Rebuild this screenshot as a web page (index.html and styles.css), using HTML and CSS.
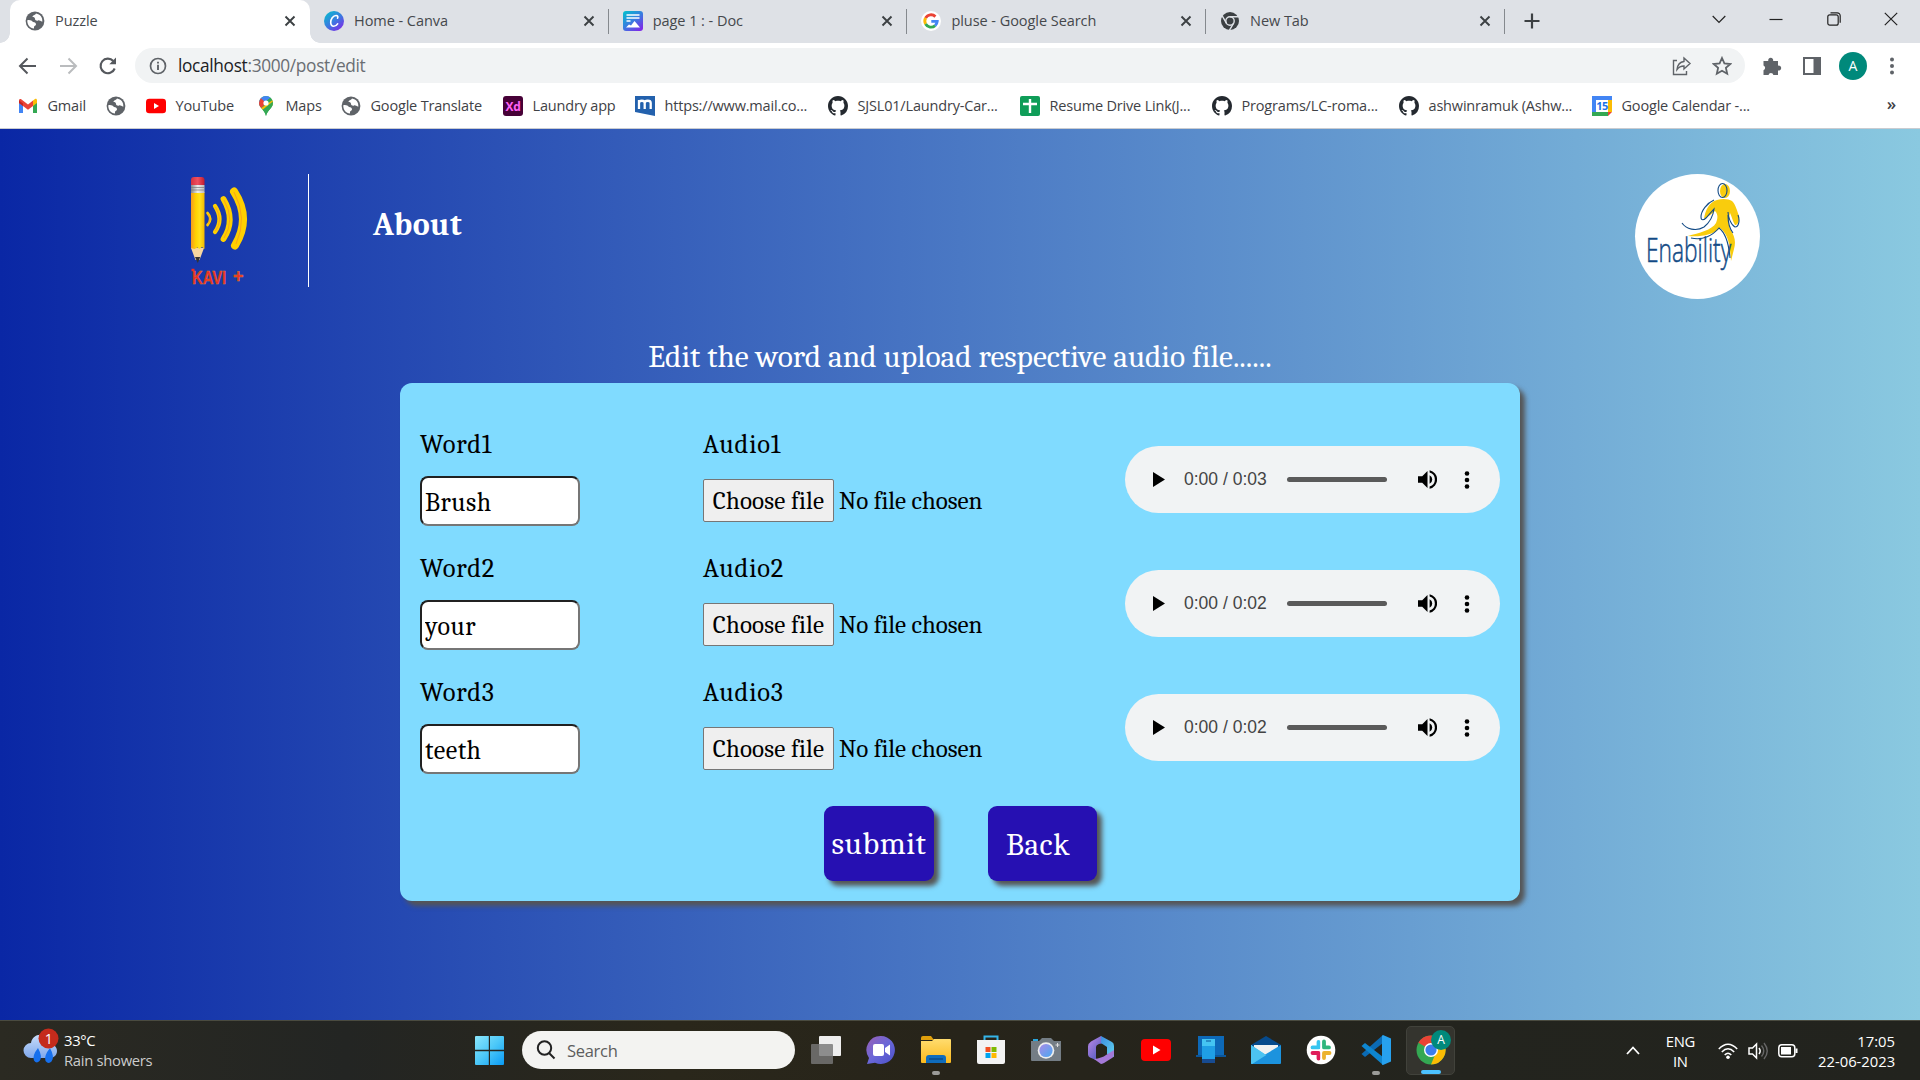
FILE: index.html
```html
<!DOCTYPE html>
<html lang="en">
<head>
<meta charset="utf-8">
<title>Puzzle</title>
<link rel="stylesheet" href="styles.css">
</head>
<body>
<svg class="defs" width="0" height="0">
  <defs>
    <symbol id="globe" viewBox="0 0 20 20"><circle cx="10" cy="10" r="9.4" fill="#5f6368"/><path d="M11 2.5c-1 2-3.500 1.500-3.500 3.500 1.500 0 2.500.5 2.500 2s2 2 3 1.500 2.500.5 4.300 1.200c.5-4-2-7.500-6.300-8.200z" fill="#fff"/><path d="M2.300 9.200c2.500-.6 4.700.3 5.700 1.800 2 0 3 1 3 2.500 0 1.300-2 1.300-2 2.500v1.600C5 17.200 2 13.500 2.300 9.200z" fill="#fff"/></symbol>
    <symbol id="x" viewBox="0 0 12 12"><path d="M1.500 1.500l9 9M10.500 1.500l-9 9" stroke="#3c4043" stroke-width="1.9" fill="none"/></symbol>
    <symbol id="github" viewBox="0 0 16 16"><path fill="#24292f" d="M8 0C3.580 0 0 3.580 0 8c0 3.540 2.290 6.530 5.470 7.590.4.070.55-.17.55-.38 0-.19-.010-.82-.010-1.490-2.010.37-2.530-.49-2.690-.94-.09-.23-.48-.94-.82-1.130-.28-.15-.68-.52-.010-.53.63-.010 1.080.58 1.230.82.72 1.210 1.870.87 2.330.66.070-.52.280-.87.510-1.070-1.780-.2-3.640-.89-3.640-3.950 0-.87.310-1.590.820-2.150-.08-.2-.36-1.020.08-2.120 0 0 .67-.21 2.200.82.640-.18 1.320-.27 2-.27s1.360.09 2 .27c1.530-1.040 2.200-.82 2.200-.82.440 1.100.160 1.920.080 2.120.510.560.820 1.270.820 2.150 0 3.070-1.870 3.750-3.650 3.950.290.250.540.730.540 1.480 0 1.070-.010 1.930-.010 2.200 0 .21.150.46.550.38A8.010 8.010 0 0 0 16 8c0-4.420-3.580-8-8-8z"/></symbol>
    <symbol id="youtube" viewBox="0 0 30 24"><rect width="30" height="22" y="1" rx="5" fill="#f00"/><path d="M12 7.500v9l7.500-4.500z" fill="#fff"/></symbol>
    <symbol id="play" viewBox="0 0 12 15"><path d="M0 0v15l12-7.500z"/></symbol>
    <symbol id="volume" viewBox="0 0 18 18"><path d="M0 6v6h4l5 5V1L4 6zM13.500 9A4.500 4.500 0 0 0 11 5v8a4.500 4.500 0 0 0 2.500-4zM11 .2v2.100a7 7 0 0 1 0 13.400v2.100a9 9 0 0 0 0-17.600z"/></symbol>
    <symbol id="dots" viewBox="0 0 6 18"><circle cx="3" cy="2.500" r="2.300"/><circle cx="3" cy="9" r="2.300"/><circle cx="3" cy="15.500" r="2.300"/></symbol>
    <linearGradient id="canva" x2=".8" y2="1"><stop offset="0" stop-color="#00c4cc"/><stop offset=".55" stop-color="#3a7be0"/><stop offset="1" stop-color="#7d2ae8"/></linearGradient>
    <linearGradient id="win" x2="1" y2="1"><stop stop-color="#8be6fb"/><stop offset=".5" stop-color="#4cc8f8"/><stop offset="1" stop-color="#0a9bf5"/></linearGradient>
    <linearGradient id="chatg" x2="1" y2="1"><stop stop-color="#9a5fb5"/><stop offset=".5" stop-color="#6a67d8"/><stop offset="1" stop-color="#4a50c8"/></linearGradient>
    <linearGradient id="foldg" x2="0" y2="1"><stop stop-color="#ffdc6e"/><stop offset="1" stop-color="#fbb91d"/></linearGradient>
    <linearGradient id="lens" x2="1" y2="1"><stop stop-color="#a98be8"/><stop offset="1" stop-color="#4aa9f0"/></linearGradient>
    <linearGradient id="m1" x2="1" y2="1"><stop stop-color="#c08be8"/><stop offset="1" stop-color="#3c50b8"/></linearGradient>
    <linearGradient id="m2" x2="1" y2="1"><stop stop-color="#3d8be0"/><stop offset="1" stop-color="#5fd4f0"/></linearGradient>
    <linearGradient id="rain" x2="0" y2="1"><stop stop-color="#c7dcfa"/><stop offset="1" stop-color="#7fa8ec"/></linearGradient>
    <linearGradient id="pencil" x2="1" y2="0"><stop stop-color="#f59b20"/><stop offset=".35" stop-color="#ffd200"/><stop offset=".65" stop-color="#ffe11c"/><stop offset="1" stop-color="#f2b800"/></linearGradient>
    <linearGradient id="eraser" x2="1" y2="0"><stop stop-color="#d63240"/><stop offset=".5" stop-color="#ef5060"/><stop offset="1" stop-color="#c01c30"/></linearGradient>
    <linearGradient id="ferrule" x2="1" y2="0"><stop stop-color="#888"/><stop offset=".5" stop-color="#eee"/><stop offset="1" stop-color="#bbb"/></linearGradient>
  </defs>
</svg>

<header class="browser">
  <div class="tabs">
    <div class="tab active"><svg class="fav"><use href="#globe"/></svg><span>Puzzle</span><svg class="cls"><use href="#x"/></svg></div>
    <div class="tab">
      <svg class="fav" viewBox="0 0 20 20"><circle cx="10" cy="10" r="10" fill="url(#canva)"/><path d="M13.500 7.200c.8-1.200.3-2.700-1.500-2.700-3 0-5.300 3.700-5.300 6.800 0 2.400 1.200 3.900 3 3.900 1.700 0 3-.9 3.900-2.400" fill="none" stroke="#fff" stroke-width="1.600" stroke-linecap="round"/></svg>
      <span>Home - Canva</span><svg class="cls"><use href="#x"/></svg></div>
    <div class="tab">
      <svg class="fav" viewBox="0 0 20 20"><rect width="20" height="20" rx="3" fill="url(#canva)"/><path d="M3.500 4h13M3.500 7h13M3.500 10h4" stroke="#fff" stroke-width="1.700"/><path d="M3 16.500l3-3 2 1 3.500-4.500 5.500 6.500z" fill="#fff"/></svg>
      <span>page 1 : - Doc</span><svg class="cls"><use href="#x"/></svg></div>
    <div class="tab">
      <svg class="fav" viewBox="0 0 20 20"><circle cx="10" cy="10" r="10" fill="#fff"/><g fill="none" stroke-width="2.900"><path d="M14.400 5.600A6.200 6.200 0 0 0 4.600 7" stroke="#ea4335"/><path d="M4.600 7a6.200 6.200 0 0 0 0 6" stroke="#fbbc05"/><path d="M4.600 13a6.200 6.200 0 0 0 9.500 1.600" stroke="#34a853"/><path d="M14.100 14.600a6.200 6.200 0 0 0 2.100-4.200H10.300" stroke="#4285f4"/></g></svg>
      <span>pluse - Google Search</span><svg class="cls"><use href="#x"/></svg></div>
    <div class="tab">
      <svg class="fav" viewBox="0 0 20 20"><circle cx="10" cy="10" r="9" fill="#3c4043"/><circle cx="10" cy="10" r="4.200" fill="none" stroke="#dee1e6" stroke-width="1.400"/><path d="M10 5.800h8.500M6.400 12.100L2.200 4.800M13.600 12.100L9.400 19.300" stroke="#dee1e6" stroke-width="1.400"/></svg>
      <span>New Tab</span><svg class="cls"><use href="#x"/></svg></div>
    <svg class="plus" viewBox="0 0 16 16"><path d="M8 .5v15M.5 8h15" stroke="#3c4043" stroke-width="2.200"/></svg>
    <div class="wincontrols">
      <svg viewBox="0 0 14 14"><path d="M.7 4L7 10.500 13.300 4" /></svg>
      <svg viewBox="0 0 14 14"><path d="M.5 7.500h13"/></svg>
      <svg viewBox="0 0 14 14"><rect x=".8" y="2.800" width="10.400" height="10.400" rx="2"/><path d="M3.500.8h6.700a3 3 0 0 1 3 3v7"/></svg>
      <svg viewBox="0 0 14 14"><path d="M.8.8l12.400 12.400M13.200.8L.8 13.200"/></svg>
    </div>
  </div>
  <div class="toolbar">
    <svg class="nav" viewBox="0 0 20 20"><path d="M18 10H2.500M9.500 2.500L2 10l7.500 7.500" fill="none" stroke="#55585d" stroke-width="2"/></svg>
    <svg class="nav" viewBox="0 0 20 20"><path d="M2 10h15.500M10.500 2.500L18 10l-7.500 7.500" fill="none" stroke="#babcbe" stroke-width="2"/></svg>
    <svg class="nav" viewBox="0 0 20 20"><path d="M16.700 12.500A7.300 7.300 0 1 1 15.300 5" fill="none" stroke="#55585d" stroke-width="2.100"/><path d="M18 1.500V8.200H11.300z" fill="#55585d"/></svg>
    <div class="omnibox">
      <svg width="18" height="18" viewBox="0 0 18 18"><circle cx="9" cy="9" r="7.500" fill="none" stroke="#5f6368" stroke-width="1.700"/><path d="M9 7.800V13M9 4.800v1.800" stroke="#5f6368" stroke-width="1.900"/></svg>
      <span class="url">localhost<i>:3000/post/edit</i></span>
      <svg class="share" width="20" height="20" viewBox="0 0 20 20"><path d="M5 4.500H1.500v14h13V15M12 2l6 5.500-6 5.500V10c-3 0-5 .7-7 3.500.5-4.500 3-7.500 7-8z" fill="none" stroke="#5f6368" stroke-width="1.400"/></svg>
      <svg width="20" height="20" viewBox="0 0 20 20"><path d="M10 2l2.400 5.400 5.900.6-4.400 3.900 1.300 5.800-5.200-3-5.200 3 1.300-5.800L1.700 8l5.900-.6z" fill="none" stroke="#5f6368" stroke-width="1.800"/></svg>
    </div>
    <div class="actions">
      <svg viewBox="0 0 20 20"><path d="M1.500 5h4.800a2.500 2.500 0 1 1 4.800 0H16v4.700a2.500 2.500 0 1 1 0 4.800V19h-4.600a2.500 2.500 0 0 0-4.900 0h-5v-4.800a2.500 2.500 0 0 0 0-4.700z" fill="#5f6368"/></svg>
      <svg viewBox="0 0 20 20"><path d="M2 2h16v16H2zM12.500 2v16" fill="none" stroke="#5f6368" stroke-width="2"/><path d="M12 2h6v16h-6z" fill="#5f6368"/></svg>
      <b class="avatar">A</b>
      <svg viewBox="0 0 20 20" fill="#5f6368"><circle cx="10" cy="3.500" r="2"/><circle cx="10" cy="10" r="2"/><circle cx="10" cy="16.500" r="2"/></svg>
    </div>
  </div>
  <div class="bookmarks">
    <a><svg viewBox="0 0 20 20"><path d="M1 4v13h4V9z" fill="#4285f4"/><path d="M19 4v13h-4V9z" fill="#34a853"/><path d="M15 4.500l2-1.400c1-.6 2 0 2 1.300V7l-4 3z" fill="#fbbc04"/><path d="M1 7V4.400c0-1.300 1.200-1.900 2.200-1.200L10 8.400l5-3.900V10l-5 3.800z" fill="#ea4335"/><path d="M1 7V4.400l4 3V10z" fill="#c5221f"/></svg><span>Gmail</span></a>
    <a><svg><use href="#globe"/></svg></a>
    <a><svg><use href="#youtube"/></svg><span>YouTube</span></a>
    <a><svg viewBox="0 0 20 20"><path d="M10 0a7 7 0 0 0-7 7c0 5 5.500 6.500 7 13 1.500-6.500 7-8 7-13a7 7 0 0 0-7-7z" fill="#34a853"/><path d="M10 0a7 7 0 0 0-7 7l1 3L14.500 1.600A7 7 0 0 0 10 0z" fill="#4285f4"/><path d="M3 7c0 2 1 3.600 2.300 5L10 7 5 2.200A7 7 0 0 0 3 7z" fill="#ea4335"/><path d="M5.300 12L16.400 4.200c1.600 4-.8 6.300-3 8.800L7 13.700z" fill="#fbbc04"/><path d="M10 20c-.6-3-2-4.700-3.400-6.200L16.800 5.500C18 12 11.500 13.500 10 20z" fill="#34a853"/><circle cx="10" cy="7" r="2.600" fill="#fff"/></svg><span>Maps</span></a>
    <a><svg><use href="#globe"/></svg><span>Google Translate</span></a>
    <a><svg viewBox="0 0 20 20"><rect width="20" height="20" rx="3" fill="#470137"/><text x="10" y="14.500" text-anchor="middle" class="xd">Xd</text></svg><span>Laundry app</span></a>
    <a><svg viewBox="0 0 20 20"><path d="M0 0h20v20L0 16z" fill="#2361ad"/><path d="M4 13V4M4 7c0-3 5.700-3 5.700 0v6M9.700 7c0-3 6-3 6 0v6" fill="none" stroke="#fff" stroke-width="2.300"/></svg><span>https://www.mail.co...</span></a>
    <a><svg><use href="#github"/></svg><span>SJSL01/Laundry-Car...</span></a>
    <a><svg viewBox="0 0 20 20"><rect width="20" height="20" rx="2" fill="#0f9d58"/><path d="M10 3v14M3 8h14" stroke="#fff" stroke-width="2.400"/></svg><span>Resume Drive Link(J...</span></a>
    <a><svg><use href="#github"/></svg><span>Programs/LC-roma...</span></a>
    <a><svg><use href="#github"/></svg><span>ashwinramuk (Ashw...</span></a>
    <a><svg viewBox="0 0 20 20"><path d="M0 0h20v4H4v16H0z" fill="#4285f4"/><path d="M16 4h4v12h-4z" fill="#fbbc04"/><path d="M4 16h12v4H0v-4z" fill="#34a853"/><path d="M16 16h4l-4 4z" fill="#ea4335"/><path d="M4 4h12v12H4z" fill="#fff"/><text x="10" y="14" text-anchor="middle" class="cal">15</text></svg><span>Google Calendar -...</span></a>
    <b class="more">»</b>
  </div>
</header>

<main class="page">
  <div class="topnav">
    <svg class="kavi" width="60" height="120" viewBox="0 0 60 120">
      <path d="M3 74h13L11.500 86h-4z" fill="#f6d6a0"/><path d="M7 83h5.200L9.800 89z" fill="#333"/>
      <path d="M3 18h13.500v57l-2.500-2-2.400 2-2.200-1.500L6.500 75 3 74z" fill="url(#pencil)"/>
      <path d="M3 11h13.500v8H3z" fill="url(#ferrule)"/><path d="M3 13.500h13.500M3 16h13.500" stroke="#777" stroke-width=".7"/>
      <path d="M3 11V6q0-3 3-3h7.500q3 0 3 3v5z" fill="url(#eraser)"/>
      <g fill="none" stroke="#ffd000" stroke-linecap="round"><path d="M19.500 39q5.500 6 0 12" stroke-width="2.600"/><path d="M27 32q9 13.500 0 26" stroke-width="4.200"/><path d="M35.500 25q12.500 21 0 40" stroke-width="5.800"/><path d="M46 17.500q17.500 27 1 54" stroke-width="8"/></g>
      <g fill="none" stroke="#f9a51a" stroke-width="1"><path d="M20 40q4 5 0 10M27.500 33q8 13 0 24M36 26q11.500 20 0 38M46 18q14 26 2 52"/></g>
      <text transform="translate(4 110) scale(.82 1)" class="kavitext">KAVI</text><text x="45" y="108" class="kavitext">+</text>
      <path d="M3.500 96h3" stroke="#ee2a24" stroke-width="2.500"/>
    </svg>
    <div class="rule"></div>
    <a class="about">About</a>
    <svg class="enability" width="125" height="125" viewBox="0 0 125 125">
      <circle cx="62.500" cy="62.500" r="62.500" fill="#fff"/>
      <g fill="#f9cc0d"><ellipse cx="90" cy="17" rx="5" ry="7"/><path d="M82 26c6-2 12-1 15 1 4 4 5 10 7 15 1 4-1 9-4 9-2-3-3-8-5-12-1 6-2 11 0 16 5 7 6 13 4 20l-3 12c-1-12-1-25-11-33-7 7-19 9-32 8 11-3 24-6 28-13 2-5 2-9-1-12-3 3-8 6-11 8 1-8 5-17 13-19z"/></g>
      <g fill="none" stroke="#124a85" stroke-width="1.100"><ellipse cx="87.500" cy="16.500" rx="4.500" ry="7"/><path d="M79 26c-7 3-13 11-13 17 0 4 3 3 5 1l8-9c-1 8-5 14-10 18-8 5-18 2-22-4M56 64c12 3 22-3 28-10 8 6 10 18 11 30M93 38c0 5 3 13 7 15 4 0 5-7 3-12M93 41c0 8 1 13 5 18"/></g>
      <text transform="translate(11 88) scale(.69 1)" class="enatext">Enability</text>
    </svg>
  </div>
  <h1 class="heading">Edit the word and upload respective audio file......</h1>
  <form class="card">
    <section class="entry">
      <div class="word"><label>Word1</label><input type="text" value="Brush"></div>
      <div class="file"><label>Audio1</label><div class="picker"><button type="button">Choose file</button><span>No file chosen</span></div></div>
      <div class="player"><svg width="12" height="15"><use href="#play"/></svg><time>0:00 / 0:03</time><i></i><svg width="19" height="19"><use href="#volume"/></svg><svg width="6" height="18"><use href="#dots"/></svg></div>
    </section>
    <section class="entry">
      <div class="word"><label>Word2</label><input type="text" value="your"></div>
      <div class="file"><label>Audio2</label><div class="picker"><button type="button">Choose file</button><span>No file chosen</span></div></div>
      <div class="player"><svg width="12" height="15"><use href="#play"/></svg><time>0:00 / 0:02</time><i></i><svg width="19" height="19"><use href="#volume"/></svg><svg width="6" height="18"><use href="#dots"/></svg></div>
    </section>
    <section class="entry">
      <div class="word"><label>Word3</label><input type="text" value="teeth"></div>
      <div class="file"><label>Audio3</label><div class="picker"><button type="button">Choose file</button><span>No file chosen</span></div></div>
      <div class="player"><svg width="12" height="15"><use href="#play"/></svg><time>0:00 / 0:02</time><i></i><svg width="19" height="19"><use href="#volume"/></svg><svg width="6" height="18"><use href="#dots"/></svg></div>
    </section>
    <div class="buttons"><button type="button" class="submit">submit</button><button type="button" class="back">Back</button></div>
  </form>
</main>

<footer class="taskbar">
  <div class="weather">
    <svg width="36" height="38" viewBox="0 0 36 38"><path d="M8 30a7.500 7.500 0 0 1 0-15C9 9 14 6 19 7c6 1 9 5 9 9 4 1 6 4 6 7 0 4-3 7-7 7z" fill="url(#rain)"/><path d="M15 20q5 9 1.500 13-3 3-5.500-.5-2-5 4-12.500zM27 20q5 9 1.500 13.500-3 3-6-.5-2-5 4.500-13z" fill="#1670ee"/><circle cx="25.500" cy="10.500" r="10" fill="#c42b1c"/><text x="25.500" y="16" text-anchor="middle" class="count">1</text></svg>
    <p>33°C<br><em>Rain showers</em></p>
  </div>
  <div class="center">
    <svg width="29" height="29" viewBox="0 0 29 29" class="start"><path d="M0 1q0-1 1-1h12.800v13.800H0zM15 0h13q1 0 1 1v12.800H15zM0 15.200h13.800V29H1q-1 0-1-1zM15 15.200h14V28q0 1-1 1H15z" fill="url(#win)"/></svg>
    <div class="search"><svg width="20" height="20" viewBox="0 0 20 20"><circle cx="8.500" cy="8" r="6.700"/><path d="M13 13l5.500 5.500"/></svg><span>Search</span></div>
    <div class="apps">
      <a><svg viewBox="0 0 30 30"><rect x="8" y="1" width="22" height="20" rx="1" fill="#eee"/><rect y="9" width="22" height="20" rx="1" fill="#777" fill-opacity=".82"/></svg></a>
      <a><svg viewBox="0 0 30 30"><path d="M15 1a14 14 0 1 1-6 26.700L1 29l2-6A14 14 0 0 1 15 1z" fill="url(#chatg)"/><rect x="7" y="9" width="11" height="12" rx="2" fill="#fff"/><path d="M19 13l5-3.500v11L19 17z" fill="#fff"/></svg></a>
      <a class="run"><svg viewBox="0 0 30 30"><path d="M0 3q0-2 2-2h8l3 4H0z" fill="#e0a00c"/><path d="M0 6h11l2-2h16q1 0 1 1v22q0 1-1 1H1q-1 0-1-1z" fill="url(#foldg)"/><path d="M5 28v-5q0-3 3-3h14q3 0 3 3v5z" fill="#0f6cbd"/><path d="M8 24h14" stroke="#0a4a88" stroke-width="1.400"/></svg></a>
      <a><svg viewBox="0 0 30 30"><path d="M8.500 6V1.500h13V6" fill="none" stroke="#35b5ea" stroke-width="2"/><path d="M1 5h28v22q0 2-2 2H3q-2 0-2-2z" fill="#f3f3f3"/><path d="M9.500 12h5v5h-5z" fill="#f25022"/><path d="M15.500 12h5v5h-5z" fill="#7fba00"/><path d="M9.500 18h5v5h-5z" fill="#00a4ef"/><path d="M15.500 18h5v5h-5z" fill="#ffb900"/></svg></a>
      <a><svg viewBox="0 0 30 30"><path d="M2 4h5v2H2z" fill="#29a5dc"/><path d="M0 6h8l3-3h9l3 3h7v19q0 1-1 1H1q-1 0-1-1z" fill="#747d85"/><circle cx="15" cy="15.500" r="8.300" fill="#eee"/><circle cx="15" cy="15.500" r="6.600" fill="url(#lens)"/><path d="M24.500 10h4M26.500 8v4" stroke="#ddd"/></svg></a>
      <a><svg viewBox="0 0 30 30"><path d="M15 1L5 6.500q-3 2-3 5v8q0 2 2 3l6 2.500V12q0-2 3-3l5-1z" fill="url(#m1)"/><path d="M15 1l11 6q2 1 2 4v11l-7-3v-7l-6-4z" fill="url(#m2)"/><path d="M8 24l7 5q1 0 3-1l8-5q2-1 2-4v-4l-8 5q-4 3-12 4z" fill="#a479d8"/></svg></a>
      <a><svg viewBox="0 0 30 30"><rect y="4" width="30" height="22" rx="4" fill="#f00"/><path d="M12 10.500v9l7.500-4.500z" fill="#fff"/></svg></a>
      <a><svg viewBox="0 0 30 30"><path d="M2 1h26v20H2z" fill="#0d69b8"/><path d="M0 20h30v2H0z" fill="#0b569b"/><path d="M6 4h13v20H6z" fill="#1f9fe5"/><path d="M6 4h13v7H6z" fill="#44c5f2"/><path d="M6 24h13v4H6z" fill="#174b91"/><path d="M10 6h5" stroke="#0b569b"/></svg></a>
      <a><svg viewBox="0 0 30 30"><path d="M0 10L15 1l15 9v6H0z" fill="#064a8c"/><path d="M3 10h24v12H3z" fill="#f1f1f1"/><path d="M0 10l15 10v9H1q-1 0-1-1z" fill="#45bdf0"/><path d="M30 10v18q0 1-1 1H1l14-10z" fill="#1c93de"/><path d="M0 10l15 10 2-1L1 29q-1 0-1-1z" fill="#4cc3f2"/></svg></a>
      <a><svg viewBox="0 0 30 30"><circle cx="15" cy="15" r="14.300" fill="#fff"/><g stroke-width="3.800" stroke-linecap="round"><path d="M12.500 7v5.500M6.500 12.500h6" stroke="#36c5f0"/><path d="M18 6.500v6M18 12.500h5" stroke="#2eb67d"/><path d="M18 18v5M18 18h5.500" stroke="#ecb22e"/><path d="M12.500 18v5.500M6.500 18h6" stroke="#e01e5a"/></g><path d="M15.200 5v20M5 15.200h20" stroke="#fff" stroke-width="1.500"/></svg></a>
      <a class="run"><svg viewBox="0 0 30 30"><path d="M22 0v8L4 22l-3.500-3L22 0z" fill="#0b6bb5"/><path d="M22 30v-8L4 8 .5 11z" fill="#0e86d0"/><path d="M22 0l8 3.500v23L22 30q-1 0-1-1V1z" fill="#27a1ee"/></svg></a>
      <a class="current"><svg viewBox="0 0 30 30"><circle cx="15" cy="15" r="14.500" fill="#34a853"/><path d="M15 15L2.400 7.700A14.500 14.500 0 0 1 27.600 7.700z" fill="#ea4335"/><path d="M27.600 7.700A14.500 14.500 0 0 1 15 29.500L21 15l-2-7.300z" fill="#fbbc04"/><circle cx="15" cy="15" r="7" fill="#fff"/><circle cx="15" cy="15" r="5.600" fill="#3b7ded"/></svg><b>A</b></a>
    </div>
  </div>
  <div class="tray">
    <svg width="14" height="9" viewBox="0 0 14 9"><path d="M1 8l6-6.500L13 8" stroke-width="1.800"/></svg>
    <p class="lang">ENG<br>IN</p>
    <svg width="20" height="18" viewBox="0 0 20 18"><path d="M.8 7q9.200-9.500 18.400 0M3.800 10q6.200-6.500 12.400 0M6.700 13q3.300-3.500 6.600 0" stroke-width="1.500"/><circle cx="10" cy="15.200" r="1.800" fill="#fff" stroke="none"/></svg>
    <svg width="20" height="18" viewBox="0 0 20 18"><path d="M1 6h3.500L8.500 2v14l-4-4H1zM11 6q2.300 3 0 6" stroke-width="1.500"/><path d="M13.500 3.500q4.500 5.500 0 11M16 1q6.500 8 0 16" stroke="#666" stroke-width="1.400"/></svg>
    <svg width="20" height="14" viewBox="0 0 20 14"><rect x=".8" y=".8" width="16" height="12" rx="3" stroke-width="1.500"/><path d="M3 3h10v7.600H3zM17.500 4.500h2v4.500h-2z" fill="#fff" stroke="none"/></svg>
    <p class="clock">17:05<br>22-06-2023</p>
  </div>
</footer>
</body>
</html>
```
FILE: styles.css
```css
* { box-sizing: border-box; }
body { margin: 0; width: 1920px; height: 1080px; overflow: hidden; display: flex; flex-direction: column; font-family: "Open Sans", "Noto Sans", sans-serif; }
p { margin: 0; }
svg { flex: none; display: block; }
.defs { position: absolute; }

/* browser chrome */
.browser { height: 129px; flex: none; background: #fff; border-bottom: 1px solid #c9ccd1; }
.tabs { height: 43px; background: #dee1e6; display: flex; padding-left: 10px; align-items: stretch; }
.tab { width: 298.700px; flex: none; display: flex; align-items: center; padding: 0 14px 1px 14px; font-size: 14.500px; letter-spacing: -.05px; color: #45484c; position: relative; }
.tab.active { width: 300px; background: #fff; border-radius: 10px 10px 0 0; padding-left: 15px; }
.tab.active::before, .tab.active::after { content: ""; position: absolute; bottom: 0; width: 10px; height: 10px; }
.tab.active::before { left: -10px; background: radial-gradient(circle at 0 0, transparent 9.500px, #fff 10px); }
.tab.active::after { right: -10px; background: radial-gradient(circle at 100% 0, transparent 9.500px, #fff 10px); }
.tab:not(.active)::after { content: ""; width: 1px; height: 25px; background: #85898e; position: absolute; right: 0; top: 9px; }
.tab span { flex: 1; white-space: nowrap; padding-bottom: 1px; }
.fav { width: 20px; height: 20px; margin-right: 10px; }
.cls { width: 12px; height: 12px; }
.plus { width: 16px; height: 16px; margin: 13px 0 0 19px; }
.wincontrols { margin-left: auto; display: flex; gap: 43.300px; padding: 12px 22px 0 0; }
.wincontrols svg { width: 14px; height: 14px; fill: none; stroke: #222; stroke-width: 1.200; }
.toolbar { height: 45px; display: flex; align-items: center; padding-left: 18px; }
.nav { width: 20px; height: 20px; margin-right: 20px; }
.omnibox { width: 1610px; height: 35px; margin-left: -3px; border-radius: 18px; background: #f1f3f4; display: flex; align-items: center; padding: 0 13px 0 14px; }
.url { margin-left: 11px; font-size: 17.300px; letter-spacing: -.33px; color: #202124; }
.url i { font-style: normal; color: #6a6e73; }
.share { margin-left: auto; margin-right: 20px; }
.actions { display: flex; align-items: center; margin-left: 17px; }
.actions svg { width: 20px; height: 20px; margin-right: 20px; }
.avatar { width: 28px; height: 28px; border-radius: 50%; background: #00897b; color: #fff; font-size: 14px; font-weight: 400; text-align: center; line-height: 28px; margin: 0 15px 0 -3px; }
.actions svg:last-child { margin: 0; }
.bookmarks { height: 36px; display: grid; grid-template-columns: 88px 40px 110px 85px 162px 132px 193px 192px 192px 187px 193px 1fr auto; align-items: center; padding: 0 24px 1px 18px; font-size: 14.500px; letter-spacing: -.18px; color: #3f4246; }
.bookmarks a { display: flex; align-items: center; gap: 9.500px; white-space: nowrap; }
.bookmarks span { padding-bottom: 1px; }
.bookmarks svg { width: 20px; height: 20px; }
.xd { font: bold 12px "Open Sans", sans-serif; fill: #ff61f6; }
.cal { font: bold 11px "Open Sans", sans-serif; fill: #1a73e8; letter-spacing: -.5px; }
.more { font-size: 17px; font-weight: 600; line-height: 20px; padding-bottom: 3px; }

/* web page */
.page { flex: none; height: 891px; background: linear-gradient(to right, #0a27a5 0%, #4a78c4 50%, #8ac9e0 100%); font-family: Cambria, "Liberation Serif", serif; display: flex; flex-direction: column; align-items: center; }
.topnav { width: 100%; height: 200px; padding: 45px 160px 0 188px; display: flex; align-items: flex-start; }
.kavitext { font: bold 18px "Liberation Sans", sans-serif; fill: #ee2a24; stroke: #d98a2b; stroke-width: .4; }
.rule { width: 1px; height: 113px; background: #fff; margin-left: 60px; }
.about { color: #fff; font-weight: bold; font-size: 32px; line-height: 36px; margin: 33px 0 0 64px; letter-spacing: .4px; }
.enability { margin-left: auto; overflow: visible; }
.enatext { font: 300 33px "Open Sans", sans-serif; fill: #124a85; stroke: #124a85; stroke-width: .5; }
.heading { margin: 10px 0 0; height: 44px; line-height: 36px; font-size: 31.400px; font-weight: 400; color: #fff; white-space: nowrap; }
.card { width: 1120px; height: 518px; background: #80dbff; border-radius: 12px; box-shadow: 5px 5px 5px #555; padding: 44px 20px 0; }
.entry { height: 124px; display: grid; grid-template-columns: 283px 422px 375px; }
.entry label { display: block; height: 49px; line-height: 36px; font-size: 26.500px; letter-spacing: .8px; }
.entry input { display: block; width: 160px; height: 50px; border: 2px inset #767676; border-radius: 8px; padding: 3px 3px 0; font: 26px Cambria, "Liberation Serif", serif; letter-spacing: .5px; color: #000; background: #fff; }
.picker { display: flex; align-items: center; gap: 5px; margin-top: 3px; font-size: 25px; letter-spacing: -.05px; white-space: nowrap; }
.picker button { width: 131px; height: 42.500px; border: 1px solid #767676; border-radius: 2px; background: #efefef; padding: 0; font: inherit; letter-spacing: .15px; }
.player { margin-top: 19px; height: 67px; border-radius: 34px; background: #f1f3f4; display: flex; align-items: center; padding-left: 28px; font-family: "Liberation Sans", Arial, sans-serif; font-size: 17.500px; color: #444; }
.player time { width: 84px; margin-left: 19px; white-space: nowrap; letter-spacing: 0; }
.player i { width: 100px; height: 5px; border-radius: 3px; background: #5a5a5a; margin: 0 31px 0 19px; }
.player svg:last-child { margin-left: 27px; }
.buttons { display: flex; gap: 54px; margin: 7px 0 0 404px; }
.buttons button { width: 110px; height: 75px; border: 0; border-radius: 9px; background: #2610b2; color: #fff; box-shadow: 5px 5px 5px #555; font: 32px Cambria, "Liberation Serif", serif; letter-spacing: .5px; padding: 0; }
.buttons .back { width: 109px; padding: 3px 9px 0 0; font-size: 31px; }

/* taskbar */
.taskbar { flex: none; height: 60px; background: linear-gradient(to right, #2b2a22, #232523 18%, #2a271b 35%, #27241a 50%, #23241e 75%, #22231e); border-top: 1px solid #4a4b40; display: flex; color: #fff; font-size: 14.800px; line-height: 20px; letter-spacing: -.3px; }
.weather { width: 475px; display: flex; padding: 6px 0 0 23px; }
.weather svg { margin-top: 1px; }
.weather p { margin: 3px 0 0 5px; }
.weather em { font-style: normal; color: #ccc; }
.count { font: 14px "Open Sans", sans-serif; fill: #fff; }
.center { display: flex; height: 58px; align-items: center; }
.search { width: 273px; height: 38px; margin-left: 18px; border-radius: 19px; background: #f3f3f1; color: #5d5d5d; display: flex; align-items: center; padding-left: 14px; gap: 11px; font-size: 16.500px; }
.search span { padding-top: 1px; }
.search svg { fill: none; stroke: #222; stroke-width: 2; }
.apps { display: flex; margin-left: 6px; gap: 6px; }
.apps a { width: 49px; height: 49px; position: relative; display: flex; align-items: center; justify-content: center; }
.apps svg { width: 30px; height: 30px; }
.run::after, .current::after { content: ""; position: absolute; bottom: 0; width: 8px; height: 4px; border-radius: 2px; background: #9b9b98; }
.apps .current { background: #34342e; border: 1px solid #41423b; border-radius: 5px; }
.current::after { width: 20px; background: #4cc2ff; }
.current b { position: absolute; right: 3px; top: 3px; width: 20px; height: 20px; border-radius: 50%; background: #00897b; font-size: 12px; font-weight: 400; text-align: center; }
.tray { margin-left: auto; display: flex; align-items: center; height: 58px; padding: 1px 25px 0 0; }
.tray svg { fill: none; stroke: #fff; margin-right: 10px; }
.tray svg:first-child { margin-right: 26px; }
.lang { text-align: center; margin-right: 23px; }
.clock { text-align: right; margin-left: 10px; width: 77px; white-space: nowrap; letter-spacing: 0; }
```
